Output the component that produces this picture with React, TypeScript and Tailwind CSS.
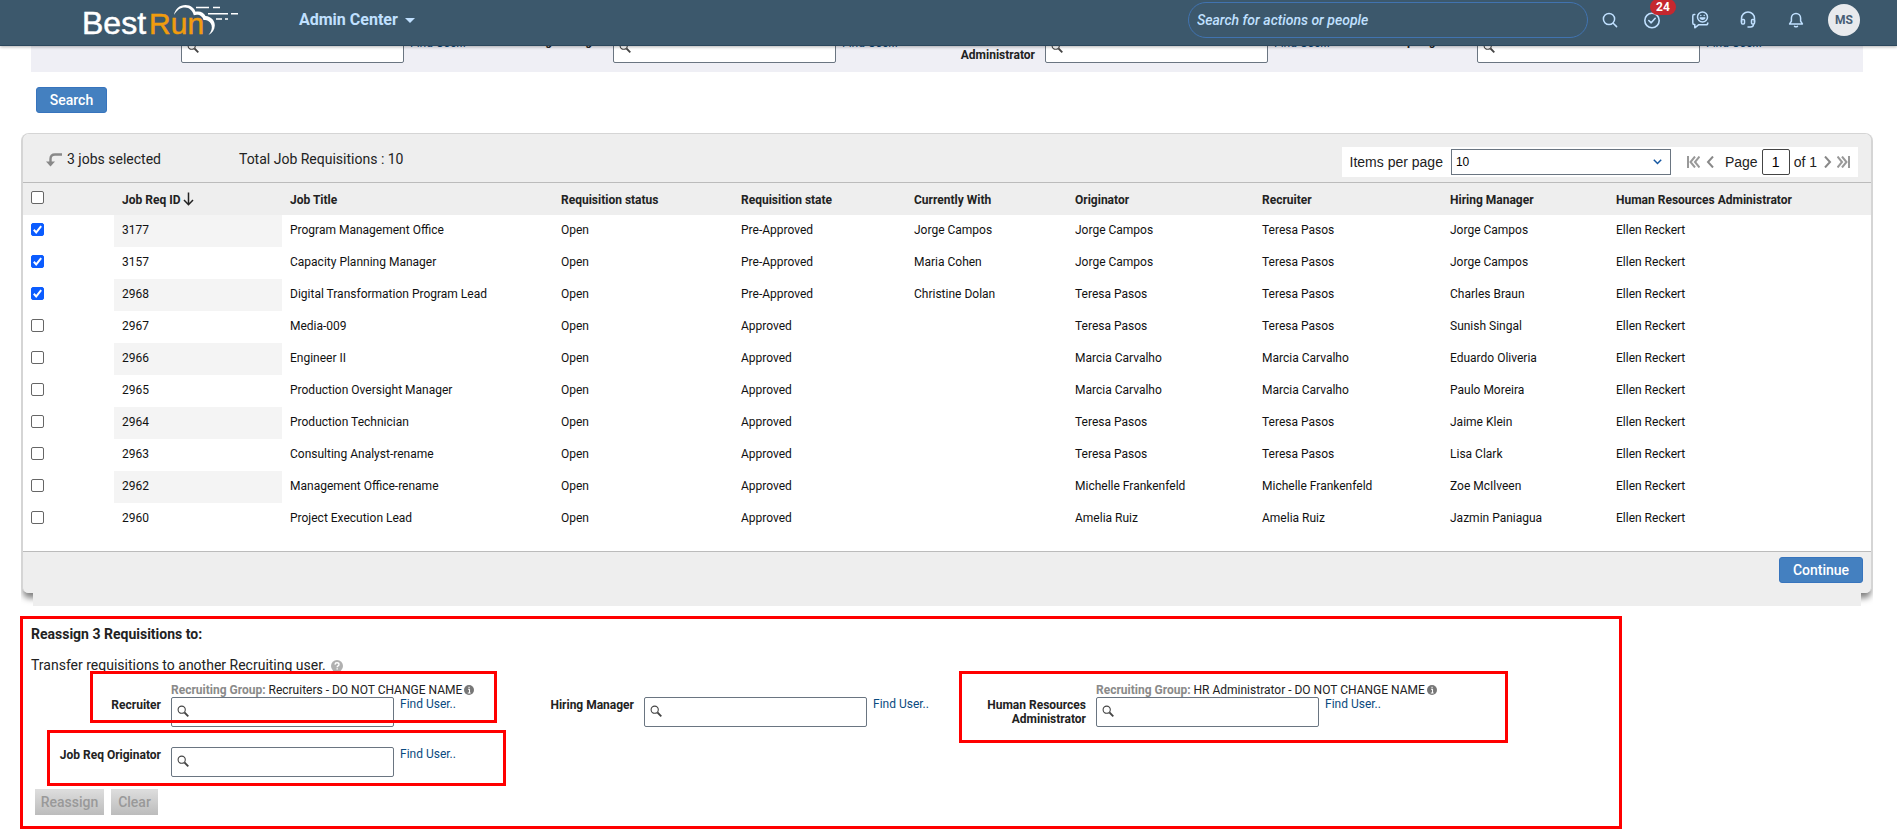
import React, { useState } from "react";

type Job = {
  id: string;
  title: string;
  state: string;
  currentlyWith: string;
  originator: string;
  recruiter: string;
  manager: string;
  selected: boolean;
};

const JOBS: Job[] = [
  { id: "3177", title: "Program Management Office", state: "Pre-Approved", currentlyWith: "Jorge Campos", originator: "Jorge Campos", recruiter: "Teresa Pasos", manager: "Jorge Campos", selected: true },
  { id: "3157", title: "Capacity Planning Manager", state: "Pre-Approved", currentlyWith: "Maria Cohen", originator: "Jorge Campos", recruiter: "Teresa Pasos", manager: "Jorge Campos", selected: true },
  { id: "2968", title: "Digital Transformation Program Lead", state: "Pre-Approved", currentlyWith: "Christine Dolan", originator: "Teresa Pasos", recruiter: "Teresa Pasos", manager: "Charles Braun", selected: true },
  { id: "2967", title: "Media-009", state: "Approved", currentlyWith: "", originator: "Teresa Pasos", recruiter: "Teresa Pasos", manager: "Sunish Singal", selected: false },
  { id: "2966", title: "Engineer II", state: "Approved", currentlyWith: "", originator: "Marcia Carvalho", recruiter: "Marcia Carvalho", manager: "Eduardo Oliveria", selected: false },
  { id: "2965", title: "Production Oversight Manager", state: "Approved", currentlyWith: "", originator: "Marcia Carvalho", recruiter: "Marcia Carvalho", manager: "Paulo Moreira", selected: false },
  { id: "2964", title: "Production Technician", state: "Approved", currentlyWith: "", originator: "Teresa Pasos", recruiter: "Teresa Pasos", manager: "Jaime Klein", selected: false },
  { id: "2963", title: "Consulting Analyst-rename", state: "Approved", currentlyWith: "", originator: "Teresa Pasos", recruiter: "Teresa Pasos", manager: "Lisa Clark", selected: false },
  { id: "2962", title: "Management Office-rename", state: "Approved", currentlyWith: "", originator: "Michelle Frankenfeld", recruiter: "Michelle Frankenfeld", manager: "Zoe McIlveen", selected: false },
  { id: "2960", title: "Project Execution Lead", state: "Approved", currentlyWith: "", originator: "Amelia Ruiz", recruiter: "Amelia Ruiz", manager: "Jazmin Paniagua", selected: false },
];

function Logo() {
  return (
    <a href="#home" aria-label="BestRun home" className="relative block w-[156px] font-['Liberation_Sans',sans-serif] text-[32px] leading-[44px] text-white [-webkit-text-stroke:0.5px]">
      <span className="block pt-[1px]">
        Best<span className="pl-[3px] text-[30px] text-[#f09c0e]">Run</span>
      </span>
      <svg className="absolute left-[90px] top-[3px]" width="68" height="34" viewBox="0 0 68 34" fill="none" aria-hidden="true">
        <path d="M2 12C3 6 7.500 2 13.500 2C19 2 22.500 5.500 23.500 8.800C28 7.600 32 9.800 33.500 13C39 13.500 43 17.500 42.800 22.500C42.600 26.800 40.500 30 36.500 32C39.500 28.500 40.300 25.500 39.600 22.500C38.800 19 36 17 31.500 17C30.500 13 26.500 10.700 21.800 12.300C20.500 7.500 17.500 4.800 13 4.600C8.500 4.500 5 7 2 12Z" fill="#fff" />
        <path d="M24 4.500H37M41 4.500H48M36 10.700H56M59 10.700H66M44 16H50M53 16H56" stroke="#fff" strokeWidth="1.600" />
      </svg>
    </a>
  );
}

function TaskIcon() {
  return (
    <svg width="18" height="18" viewBox="0 0 18 18" fill="none" stroke="currentColor" strokeWidth="1.600" strokeLinecap="round" strokeLinejoin="round" aria-hidden="true">
      <circle cx="9" cy="9.500" r="7.200" />
      <path d="M5.800 9.500L8.200 11.800L12.200 7.300" />
    </svg>
  );
}

function AssistantIcon() {
  return (
    <svg width="18" height="18" viewBox="0 0 18 18" fill="none" stroke="currentColor" strokeWidth="1.500" strokeLinecap="round" strokeLinejoin="round" aria-hidden="true">
      <circle cx="11.500" cy="6" r="5" />
      <path d="M9.200 7C10 8.800 13 8.800 13.800 7Z" />
      <path d="M9.800 4.400V4.500M13.200 4.400V4.500" />
      <path d="M3.800 3.500H3Q1.800 3.500 1.800 5V12Q1.800 13.500 3.200 13.500H3.800V16.800L7.500 13.800H15Q16.800 13.800 16.800 12" />
    </svg>
  );
}

function HeadsetIcon() {
  return (
    <svg width="16" height="18" viewBox="0 0 16 18" fill="none" stroke="currentColor" strokeWidth="1.500" strokeLinecap="round" strokeLinejoin="round" aria-hidden="true">
      <path d="M1.500 11V7.500A6.500 6.500 0 0 1 14.500 7.500V11" />
      <rect x="1.500" y="8.500" width="3" height="4.600" rx="1" />
      <rect x="11.500" y="8.500" width="3" height="4.600" rx="1" />
      <path d="M13.500 13.500Q13.300 16 10.500 16H8" />
    </svg>
  );
}

function SearchIcon() {
  return (
    <svg width="16" height="16" viewBox="0 0 16 16" fill="none" stroke="currentColor" strokeWidth="1.500" strokeLinecap="round" aria-hidden="true">
      <circle cx="7" cy="7" r="5.600" />
      <path d="M11.200 11.200L14.600 14.600" />
    </svg>
  );
}

function BellIcon() {
  return (
    <svg width="16" height="16" viewBox="0 0 16 16" fill="none" stroke="currentColor" strokeWidth="1.500" strokeLinecap="round" strokeLinejoin="round" aria-hidden="true">
      <path d="M1.600 12H14.400L12.600 9.200V6A4.600 4.600 0 0 0 3.400 6V9.200Z" />
      <path d="M6.500 14.300Q8 15.300 9.500 14.300" />
    </svg>
  );
}

function Magnifier() {
  return (
    <svg className="pointer-events-none absolute left-[6px] top-[8px]" width="13" height="13" viewBox="0 0 13 13" fill="none" stroke="#444" aria-hidden="true">
      <circle cx="4.700" cy="4.700" r="3.600" strokeWidth="1.100" />
      <path d="M7.500 7.500L11.300 11.300" strokeWidth="1.800" />
    </svg>
  );
}

function InfoIcon() {
  return (
    <svg className="mt-[2px] shrink-0" width="10" height="10" viewBox="0 0 10 10" aria-hidden="true">
      <circle cx="5" cy="5" r="5" fill="#777" />
      <path d="M4 4.200H5.500V8M3.800 8H6.600M4.500 2.400H5.600" stroke="#fff" strokeWidth="1.100" fill="none" />
    </svg>
  );
}

type UserFieldProps = {
  id: string;
  label: React.ReactNode;
  labelClass: string;
  linkClass?: string;
  group?: string;
};

function UserField({ id, label, labelClass, linkClass = "", group }: UserFieldProps) {
  return (
    <div className="flex items-end">
      <div className={`h-[30px] shrink-0 pr-[10px] pt-[1px] text-right text-[12px] font-bold leading-[14px] text-[#222] ${labelClass}`}>
        <label htmlFor={id}>{label}</label>
      </div>
      <div className="w-[223px] shrink-0">
        {group && (
          <p className="flex h-[14px] items-start gap-[2px] whitespace-nowrap text-[12px] leading-[14px] text-[#222]">
            <span>
              <b className="text-[#8a8a8a]">Recruiting Group:</b> {group}
            </span>
            <InfoIcon />
          </p>
        )}
        <div className="relative">
          <input id={id} type="text" className="block h-[30px] w-full rounded-[2px] border border-[#6a7581] bg-white pl-6 pr-2 text-[12px] outline-none" />
          <Magnifier />
        </div>
      </div>
      <a href="#find-user" className={`h-[30px] shrink-0 whitespace-nowrap pl-[6px] text-[12px] leading-[14px] text-[#0a4a80] ${linkClass}`}>
        Find User..
      </a>
    </div>
  );
}

function Check({ label, checked, onChange }: { label: string; checked: boolean; onChange: () => void }) {
  return (
    <span className="relative block size-[13px]">
      <input
        type="checkbox"
        aria-label={label}
        checked={checked}
        onChange={onChange}
        className="peer block size-[13px] appearance-none rounded-[2px] border border-[#666] bg-white checked:border-[#0b5cff] checked:bg-[#0b5cff]"
      />
      <svg className="pointer-events-none absolute inset-0 hidden peer-checked:block" width="13" height="13" viewBox="0 0 13 13" fill="none" stroke="#fff" strokeWidth="2" aria-hidden="true">
        <path d="M2.800 6.800L5.200 9.400L10.200 3.200" />
      </svg>
    </span>
  );
}

const ICON_BUTTON = "relative flex h-[36px] items-center justify-center text-[#c0e0ff]";
const PRIMARY = "h-[26px] rounded-[3px] border border-[#3774bd] bg-[#4480c0] text-[14px] font-medium leading-[24px] text-white";
const DISABLED = "h-[26px] bg-linear-to-b from-[#dedede] to-[#bcbcbc] text-[14px] font-medium leading-[26px] text-[#999]";

export default function App() {
  const [jobs, setJobs] = useState(JOBS);
  const toggle = (id: string) => setJobs(jobs.map((j) => (j.id === id ? { ...j, selected: !j.selected } : j)));
  const count = jobs.filter((j) => j.selected).length;
  const all = count === jobs.length;

  return (
    <div className="overflow-hidden bg-white pb-1 font-['Roboto','Liberation_Sans',sans-serif] text-[#222]">
      <header className="relative z-10 flex h-[46px] items-start border-b border-[#2b475c] bg-[#3c586c] pl-[82px] pr-[37px] shadow-[0_1px_3px_rgba(0,0,0,0.3)]">
        <Logo />
        <button type="button" className="ml-[61px] flex h-[40px] items-center gap-[7px] text-[16px] font-bold text-[#c0e0ff]">
          Admin Center
          <span className="border-x-[5px] border-t-[5px] border-x-transparent border-t-[#c0e0ff]" />
        </button>
        <div className="ml-auto flex items-start pt-[2px]">
          <input
            type="search"
            aria-label="Search for actions or people"
            placeholder="Search for actions or people"
            className="h-[36px] w-[400px] rounded-full border border-[#4173b0] bg-transparent px-2 text-[14px] font-medium italic text-[#c0e0ff] outline-none placeholder:text-[#c0e0ff] placeholder:opacity-100"
          />
          <button type="button" aria-label="Search" className={`${ICON_BUTTON} ml-[6px] w-[32px]`}>
            <SearchIcon />
          </button>
          <button type="button" aria-label="Tasks" className={`${ICON_BUTTON} ml-[10px] w-[32px]`}>
            <TaskIcon />
            <span className="absolute -top-[3px] left-[14px] rounded-full bg-[#c5282f] px-[6px] text-[12px] font-bold leading-[16px] text-white">24</span>
          </button>
          <button type="button" aria-label="Assistant" className={`${ICON_BUTTON} ml-4 w-[32px]`}>
            <AssistantIcon />
          </button>
          <button type="button" aria-label="Support" className={`${ICON_BUTTON} ml-4 w-[32px]`}>
            <HeadsetIcon />
          </button>
          <button type="button" aria-label="Notifications" className={`${ICON_BUTTON} ml-4 w-[32px]`}>
            <BellIcon />
          </button>
          <button type="button" aria-label="Account" className="ml-4 mt-[2px] size-[32px] rounded-full bg-[#e8eaed] text-[12px] font-bold text-[#475e75]">
            MS
          </button>
        </div>
      </header>

      <section aria-label="Filters" className="ml-[31px] mr-[34px] flex h-[26px] items-end overflow-hidden bg-[#efeff5] pb-[9px]">
        <div className="w-[432px]"><UserField id="f-recruiter" label="Recruiter" labelClass="w-[150px]" linkClass="pt-[3px]" /></div>
        <div className="w-[432px]"><UserField id="f-manager" label="Hiring Manager" labelClass="w-[150px]" linkClass="pt-[3px]" /></div>
        <div className="w-[432px]"><UserField id="f-hr" label={<>Human Resources<br />Administrator</>} labelClass="w-[150px]" linkClass="pt-[3px]" /></div>
        <div className="w-[432px]"><UserField id="f-originator" label="Job Req Originator" labelClass="w-[150px]" linkClass="pt-[3px]" /></div>
      </section>

      <div className="ml-[36px] mt-[15px]">
        <button type="button" className={`${PRIMARY} block w-[71px]`}>Search</button>
      </div>

      <div className="relative ml-[21px] mr-[24px] mt-5 pb-[13px]">
        <div className="absolute inset-x-[12px] bottom-0 z-10 h-[13px] bg-[#eee]" />
        <main className="rounded-[8px] border-x-2 border-t border-[#d5d5d5] bg-white shadow-[0_7px_6px_-2px_rgba(0,0,0,0.5)] [clip-path:inset(0_0_-14px_0)]">
          <div className="flex h-[49px] rounded-t-[6px] border-b border-[#bbb] bg-[#eee] pr-[13px]">
            <div className="ml-[23px] mt-[17px] flex h-[17px] items-center gap-[5px] text-[14px] leading-[17px]">
              <svg width="16" height="14" viewBox="0 0 16 14" fill="none" aria-hidden="true">
                <path d="M16 1.500H9Q4.500 1.500 4.500 6V9" stroke="#888" strokeWidth="2.400" />
                <path d="M0 8.500H9L4.500 13.500Z" fill="#888" />
              </svg>
              <span>{count} jobs selected</span>
            </div>
            <p className="ml-[78px] mt-[17px] text-[14px] leading-[17px]">Total Job Requisitions : 10</p>
            <div className="ml-auto mt-[13px] flex h-[30px] items-center bg-white px-[8px] font-['Liberation_Sans',sans-serif] text-[14px]">
              <label htmlFor="per-page">Items per page</label>
              <div className="relative ml-2">
                <select id="per-page" className="block h-[26px] w-[220px] appearance-none border border-[#6a7581] bg-white pl-1 text-[12px] text-black outline-none">
                  <option>10</option>
                </select>
                <svg className="pointer-events-none absolute right-[9px] top-[10px]" width="9" height="6" viewBox="0 0 9 6" fill="none" stroke="#1456a0" strokeWidth="1.500" aria-hidden="true">
                  <path d="M0.800 0.800L4.500 4.500L8.200 0.800" />
                </svg>
              </div>
              <button type="button" aria-label="First page" className="ml-4 text-[#999]">
                <svg width="13" height="12" viewBox="0 0 13 12" fill="none" stroke="currentColor" strokeWidth="2" aria-hidden="true">
                  <path d="M1 0V12M8 0.500L3.500 6L8 11.500M12.500 0.500L8 6L12.500 11.500" />
                </svg>
              </button>
              <button type="button" aria-label="Previous page" className="ml-[6px] text-[#888]">
                <svg width="8" height="12" viewBox="0 0 8 12" fill="none" stroke="currentColor" strokeWidth="2" aria-hidden="true">
                  <path d="M7 0.500L2 6L7 11.500" />
                </svg>
              </button>
              <label htmlFor="page" className="ml-[11px]">Page</label>
              <input id="page" defaultValue="1" className="ml-[4px] h-[26px] w-[28px] rounded-[2px] border border-[#444] text-center text-[14px] text-black outline-none" />
              <span className="ml-[4px]">of 1</span>
              <button type="button" aria-label="Next page" className="ml-[7px] text-[#888]">
                <svg width="8" height="12" viewBox="0 0 8 12" fill="none" stroke="currentColor" strokeWidth="2" aria-hidden="true">
                  <path d="M1 0.500L6 6L1 11.500" />
                </svg>
              </button>
              <button type="button" aria-label="Last page" className="ml-[5px] text-[#999]">
                <svg width="13" height="12" viewBox="0 0 13 12" fill="none" stroke="currentColor" strokeWidth="2" aria-hidden="true">
                  <path d="M12 0V12M5 0.500L9.500 6L5 11.500M0.500 0.500L5 6L0.500 11.500" />
                </svg>
              </button>
            </div>
          </div>

          <table className="mb-4 w-full table-fixed border-collapse text-left text-[12px] leading-[14px] text-[#111]">
            <colgroup>
              <col className="w-[91px]" />
              <col className="w-[168px]" />
              <col className="w-[271px]" />
              <col className="w-[180px]" />
              <col className="w-[173px]" />
              <col className="w-[161px]" />
              <col className="w-[187px]" />
              <col className="w-[188px]" />
              <col className="w-[166px]" />
              <col />
            </colgroup>
            <thead>
              <tr className="h-[32px] bg-[#eee] text-[#222]">
                <th className="px-2 pb-1">
                  <Check label="Select all" checked={all} onChange={() => setJobs(jobs.map((j) => ({ ...j, selected: !all })))} />
                </th>
                <th className="px-2 pt-[2px]">
                  <button type="button" className="flex items-center gap-[3px] font-bold">
                    Job Req ID
                    <svg className="-mt-[3px]" width="11" height="14" viewBox="0 0 11 14" fill="none" stroke="#222" strokeWidth="1.500" aria-hidden="true">
                      <path d="M5.500 0.500V12.500M1 8L5.500 12.700L10 8" />
                    </svg>
                  </button>
                </th>
                <th className="px-2 pt-[2px]">Job Title</th>
                <th className="px-2 pt-[2px]">Requisition status</th>
                <th className="px-2 pt-[2px]">Requisition state</th>
                <th className="px-2 pt-[2px]">Currently With</th>
                <th className="px-2 pt-[2px]">Originator</th>
                <th className="px-2 pt-[2px]">Recruiter</th>
                <th className="px-2 pt-[2px]">Hiring Manager</th>
                <th className="px-2 pt-[2px]">Human Resources Administrator</th>
              </tr>
            </thead>
            <tbody>
              {jobs.map((job) => (
                <tr key={job.id} className="group h-[32px]">
                  <td className="px-2 pb-1">
                    <Check label={`Select ${job.id}`} checked={job.selected} onChange={() => toggle(job.id)} />
                  </td>
                  <td className="px-2 pb-[2px] group-odd:bg-[#f4f4f4]">{job.id}</td>
                  <td className="px-2 pb-[2px]">{job.title}</td>
                  <td className="px-2 pb-[2px]">Open</td>
                  <td className="px-2 pb-[2px]">{job.state}</td>
                  <td className="px-2 pb-[2px]">{job.currentlyWith}</td>
                  <td className="px-2 pb-[2px]">{job.originator}</td>
                  <td className="px-2 pb-[2px]">{job.recruiter}</td>
                  <td className="px-2 pb-[2px]">{job.manager}</td>
                  <td className="px-2 pb-[2px]">Ellen Reckert</td>
                </tr>
              ))}
            </tbody>
          </table>

          <div className="flex h-[42px] justify-end rounded-b-[6px] border-t border-[#bbb] bg-[#eee] pr-2 pt-[5px]">
            <button type="button" className={`${PRIMARY} w-[84px]`}>Continue</button>
          </div>
        </main>
      </div>

      <section aria-label="Reassign" className="relative ml-[20px] mr-[275px] mt-[10px] border-[3px] border-[#f00] pb-[11px] pl-2">
        <h2 className="mt-[7px] text-[14px] font-bold leading-[17px]">Reassign {count} Requisitions to:</h2>
        <p className="mt-[14px] flex items-center gap-[5px] text-[14px] leading-[17px]">
          Transfer requisitions to another Recruiting user.
          <svg width="12" height="12" viewBox="0 0 12 12" fill="none" aria-hidden="true">
            <circle cx="6" cy="6" r="6" fill="#b0b0b0" />
            <path d="M4 4.600Q4.100 2.800 6 2.800Q8 2.800 8 4.400Q8 5.400 6.900 6Q6.200 6.300 6.200 7.200M6.200 8.200V9.600" stroke="#fff" strokeWidth="1.400" />
          </svg>
        </p>
        <div className="mt-[9px] flex">
          <div className="w-[473px] shrink-0">
            <UserField id="r-recruiter" label="Recruiter" labelClass="w-[140px]" group="Recruiters - DO NOT CHANGE NAME" />
          </div>
          <div className="flex w-[452px] shrink-0 items-end">
            <UserField id="r-manager" label="Hiring Manager" labelClass="w-[140px]" />
          </div>
          <UserField id="r-hr" label={<>Human Resources<br />Administrator</>} labelClass="w-[140px]" group="HR Administrator - DO NOT CHANGE NAME" />
        </div>
        <div className="mt-5">
          <UserField id="r-originator" label="Job Req Originator" labelClass="w-[140px]" />
        </div>
        <div className="ml-1 mt-3 flex gap-[7px]">
          <button type="button" disabled className={`${DISABLED} w-[69px]`}>Reassign</button>
          <button type="button" disabled className={`${DISABLED} w-[47px]`}>Clear</button>
        </div>
        <div className="pointer-events-none absolute left-[67px] top-[52px] h-[52px] w-[407px] border-[3px] border-[#f00]" />
        <div className="pointer-events-none absolute left-[24px] top-[111px] h-[56px] w-[459px] border-[3px] border-[#f00]" />
        <div className="pointer-events-none absolute left-[936px] top-[52px] h-[72px] w-[549px] border-[3px] border-[#f00]" />
      </section>
    </div>
  );
}
